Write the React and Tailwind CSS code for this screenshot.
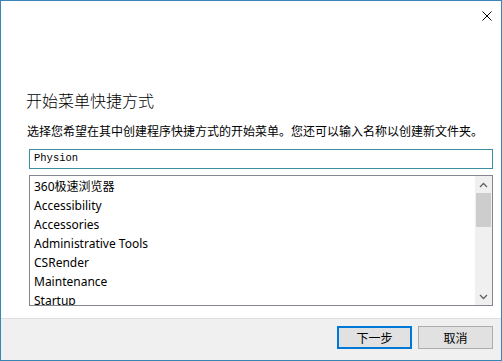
import { useState } from 'react';

const FOLDERS = [
  '360极速浏览器',
  'Accessibility',
  'Accessories',
  'Administrative Tools',
  'CSRender',
  'Maintenance',
  'Startup',
];

const UI_FONT = { fontFamily: '"Noto Sans", "Noto Sans CJK SC", sans-serif' };
const CJK_FONT = { fontFamily: '"Noto Sans CJK SC", sans-serif' };

export default function App() {
  const [folder, setFolder] = useState('Physion');

  return (
    <div className="w-[502px] h-[361px] border border-[#3a84b8] bg-white flex flex-col overflow-hidden" style={UI_FONT}>
      {/* Title bar */}
      <div className="h-[30px] flex justify-end items-start pr-[1px]">
        <button className="w-[26px] h-[30px] flex items-center justify-center">
          <svg width="10" height="10" viewBox="0 0 10 10">
            <path d="M0.5 0.5 L9.5 9.5 M9.5 0.5 L0.5 9.5" stroke="#000" strokeWidth="1" fill="none" />
          </svg>
        </button>
      </div>

      {/* Page content */}
      <div className="flex-1 flex flex-col pl-[25px] pr-[8px]">
        <h1 className="mt-[58px] text-[16px] leading-[22px] font-light text-[#000]" style={CJK_FONT}>
          开始菜单快捷方式
        </h1>
        <p className="mt-[12px] text-[12px] leading-[16px] text-[#000] ml-[1px]" style={CJK_FONT}>
          选择您希望在其中创建程序快捷方式的开始菜单。您还可以输入名称以创建新文件夹。
        </p>
        <div className="mt-[10px] ml-[3px] h-[20px] border border-[#3b8ea0] flex items-center px-[4px]">
          <input
            value={folder}
            onChange={e => setFolder(e.target.value)}
            className="w-full outline-none text-[10.5px] text-black bg-transparent"
            style={{ fontFamily: '"Liberation Mono", monospace' }}
          />
        </div>
        <div className="mt-[6px] ml-[3px] h-[131px] border border-[#828790] flex overflow-hidden">
          <ul className="flex-1 pl-[4px] pt-[1px]">
            {FOLDERS.map(f => (
              <li key={f} className="h-[19px] leading-[19px] text-[12px] text-[#000] whitespace-nowrap">
                {f}
              </li>
            ))}
          </ul>
          <div className="w-[17px] bg-[#f0f0f0] flex flex-col">
            <div className="h-[17px] flex items-center justify-center">
              <svg width="9" height="6" viewBox="0 0 9 6">
                <path d="M1 5 L4.5 1.5 L8 5" stroke="#606060" strokeWidth="1.3" fill="none" />
              </svg>
            </div>
            <div className="h-[34px] mx-[1px] bg-[#cdcdcd]" />
            <div className="flex-1" />
            <div className="h-[17px] flex items-center justify-center">
              <svg width="9" height="6" viewBox="0 0 9 6">
                <path d="M1 1 L4.5 4.5 L8 1" stroke="#606060" strokeWidth="1.3" fill="none" />
              </svg>
            </div>
          </div>
        </div>
      </div>

      {/* Footer */}
      <div className="h-[42px] bg-[#f0f0f0] border-t border-[#dfdfdf] flex justify-end items-start gap-[6px] pr-[8px] pt-[7px]">
        <button className="w-[75px] h-[23px] bg-[#e1e1e1] border-2 border-[#0078d7] text-[12px] text-black" style={CJK_FONT}>
          下一步
        </button>
        <button className="w-[75px] h-[23px] bg-[#e1e1e1] border border-[#adadad] text-[12px] text-black" style={CJK_FONT}>
          取消
        </button>
      </div>
    </div>
  );
}
